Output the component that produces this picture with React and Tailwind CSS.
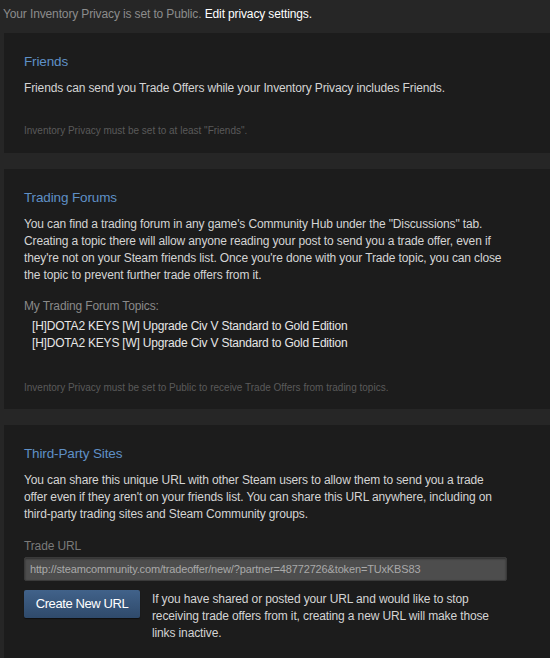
import React from "react";

const topics = [
  "[H]DOTA2 KEYS [W] Upgrade Civ V Standard to Gold Edition",
  "[H]DOTA2 KEYS [W] Upgrade Civ V Standard to Gold Edition",
];

function Section({ title, children }) {
  return (
    <div className="bg-[#1c1c1c] ml-1 -mr-4 px-5 pt-[19px]">
      <div className="w-[484px]">
        <h2 className="text-[13.5px] leading-5 text-[#5f90c6]">{title}</h2>
        {children}
      </div>
    </div>
  );
}

export default function App() {
  return (
    <div className="bg-[#262626] min-h-[658px] w-[550px] overflow-hidden font-['Liberation_Sans',Arial,sans-serif] text-[12px] tracking-[-0.13px] text-[#d4d4d4]">
      <p className="pl-[3px] pt-[6px] pb-[11px] leading-4 text-[#8c8c8c]">
        Your Inventory Privacy is set to Public.{" "}
        <span className="text-white">Edit privacy settings.</span>
      </p>

      <div className="flex flex-col gap-4">
        {/* Friends */}
        <Section title="Friends">
          <p className="mt-[8px] leading-[17px]">
            Friends can send you Trade Offers while your Inventory Privacy includes Friends.
          </p>
          <p className="pt-[26px] pb-[14px] text-[10px] tracking-normal leading-4 text-[#5a5a5a]">
            Inventory Privacy must be set to at least "Friends".
          </p>
        </Section>

        {/* Trading forums */}
        <Section title="Trading Forums">
          <p className="mt-[8px] leading-[17px]">
            You can find a trading forum in any game's Community Hub under the "Discussions" tab.
            Creating a topic there will allow anyone reading your post to send you a trade offer, even if
            they're not on your Steam friends list. Once you're done with your Trade topic, you can close
            the topic to prevent further trade offers from it.
          </p>
          <p className="mt-[14px] leading-[17px] text-[#8a8a8a]">My Trading Forum Topics:</p>
          <ul className="mt-[3px] pl-2 leading-[17px] tracking-[-0.2px] text-[#e6e6e6]">
            {topics.map((t, i) => (
              <li key={i}>{t}</li>
            ))}
          </ul>
          <p className="pt-[28px] pb-[13px] text-[10px] tracking-normal leading-4 text-[#5a5a5a]">
            Inventory Privacy must be set to Public to receive Trade Offers from trading topics.
          </p>
        </Section>

        {/* Third party */}
        <Section title="Third-Party Sites">
          <p className="mt-[8px] leading-[17px]">
            You can share this unique URL with other Steam users to allow them to send you a trade
            offer even if they aren't on your friends list. You can share this URL anywhere, including on
            third-party trading sites and Steam Community groups.
          </p>
          <p className="mt-[15px] leading-4 text-[#7a7a7a]">Trade URL</p>
          <div className="mt-[3px] w-[483px] h-[24px] bg-[#4d4d4d] border border-[#3a3a3a] rounded-[2px] px-[5px] flex items-center text-[11px] tracking-[-0.15px] text-[#a9a9a9] shadow-[inset_0_1px_2px_rgba(0,0,0,0.4)]">
            http://steamcommunity.com/tradeoffer/new/?partner=48772726&token=TUxKBS83
          </div>
          <div className="flex gap-3 mt-[9px] pb-6">
            <button className="shrink-0 w-[116px] h-[28px] rounded-[2px] bg-gradient-to-b from-[#41628a] to-[#2f4a6b] text-white text-[13px] tracking-[-0.4px] shadow-[0_1px_1px_rgba(0,0,0,0.5)]">
              Create New URL
            </button>
            <p className="leading-[17px] w-[345px] mt-[1px]">
              If you have shared or posted your URL and would like to stop
              receiving trade offers from it, creating a new URL will make those
              links inactive.
            </p>
          </div>
        </Section>
      </div>
    </div>
  );
}
